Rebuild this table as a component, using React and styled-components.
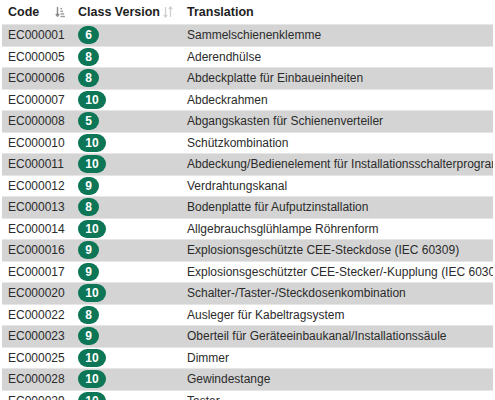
import React from 'react'
import styled, { createGlobalStyle } from 'styled-components'

const GlobalStyle = createGlobalStyle`
 html, body {
  margin: 0;
  padding: 0;
  background: #ffffff;
  font-family: "Liberation Sans", Arial, sans-serif;
 }
`

const Table = styled.div`
 width: 491px;
 margin-left: 2px;
 overflow: hidden;
 height: 400px;
 font-size: 12px;
`

const HeaderRow = styled.div`
 display: grid;
 grid-template-columns: 74px 109px 1fr;
 height: 24px;
 align-items: center;
 color: #1e1e1e;
 font-weight: bold;
 font-size: 12.5px;
`

const HeadCell = styled.div`
 display: flex;
 align-items: center;
 justify-content: space-between;
 padding-left: ${(p) => p.$pl || 0}px;
 padding-right: ${(p) => p.$pr || 0}px;
 white-space: nowrap;
`

const Row = styled.div`
 display: grid;
 grid-template-columns: 74px 109px 1fr;
 height: 21.5px;
 box-sizing: border-box;
 align-items: center;
 background: ${(p) => (p.$odd ? '#d4d4d4' : '#ffffff')};
 border-top: 1px solid #e6e6e6;
 color: #2b2b2b;
`

const CodeCell = styled.div`
 padding-left: 6px;
 white-space: nowrap;
`

const VersionCell = styled.div`
 padding-left: 2px;
`

const TextCell = styled.div`
 white-space: nowrap;
 overflow: hidden;
 padding-left: 2px;
`

const Badge = styled.span`
 display: inline-flex;
 align-items: center;
 justify-content: center;
 box-sizing: border-box;
 height: 18px;
 min-width: ${(p) => (p.$wide ? 28 : 21)}px;
 padding: 0 4px;
 border-radius: 10px;
 background: #0c7657;
 color: #ffffff;
 font-weight: bold;
 font-size: 12px;
`

const SortDown = () => (
 <svg width="10" height="12" viewBox="0 0 10 12">
  <path d="M2.5 1v9M0.8 8l1.7 2.2L4.2 8" stroke="#8a8a8a" strokeWidth="1.4" fill="none" />
  <rect x="5.5" y="2" width="1.6" height="1.4" fill="#9a9a9a" />
  <rect x="5.5" y="4.6" width="2.6" height="1.4" fill="#9a9a9a" />
  <rect x="5.5" y="7.2" width="3.6" height="1.4" fill="#9a9a9a" />
  <rect x="5.5" y="9.8" width="4.4" height="1.4" fill="#9a9a9a" />
 </svg>
)

const SortBoth = () => (
 <svg width="10" height="12" viewBox="0 0 10 12">
  <path d="M2.5 1v10M0.8 9l1.7 2L4.2 9" stroke="#cfcfcf" strokeWidth="1.3" fill="none" />
  <path d="M7.5 11V1M5.8 3l1.7-2 1.7 2" stroke="#cfcfcf" strokeWidth="1.3" fill="none" />
 </svg>
)

const rows = [
 ['EC000001', 6, 'Sammelschienenklemme'],
 ['EC000005', 8, 'Aderendhülse'],
 ['EC000006', 8, 'Abdeckplatte für Einbaueinheiten'],
 ['EC000007', 10, 'Abdeckrahmen'],
 ['EC000008', 5, 'Abgangskasten für Schienenverteiler'],
 ['EC000010', 10, 'Schützkombination'],
 ['EC000011', 10, 'Abdeckung/Bedienelement für Installationsschalterprogramm'],
 ['EC000012', 9, 'Verdrahtungskanal'],
 ['EC000013', 8, 'Bodenplatte für Aufputzinstallation'],
 ['EC000014', 10, 'Allgebrauchsglühlampe Röhrenform'],
 ['EC000016', 9, 'Explosionsgeschützte CEE-Steckdose (IEC 60309)'],
 ['EC000017', 9, 'Explosionsgeschützter CEE-Stecker/-Kupplung (IEC 60309)'],
 ['EC000020', 10, 'Schalter-/Taster-/Steckdosenkombination'],
 ['EC000022', 8, 'Ausleger für Kabeltragsystem'],
 ['EC000023', 9, 'Oberteil für Geräteeinbaukanal/Installationssäule'],
 ['EC000025', 10, 'Dimmer'],
 ['EC000028', 10, 'Gewindestange'],
 ['EC000029', 10, 'Taster'],
]

export default function App() {
 return (
  <>
   <GlobalStyle />
   <Table>
    <HeaderRow>
     <HeadCell $pl={6} $pr={11}>
      Code <SortDown />
     </HeadCell>
     <HeadCell $pl={2} $pr={12}>
      Class Version <SortBoth />
     </HeadCell>
     <HeadCell $pl={2}>Translation</HeadCell>
    </HeaderRow>
    {rows.map(([code, ver, text], i) => (
     <Row key={code} $odd={i % 2 === 0}>
      <CodeCell>{code}</CodeCell>
      <VersionCell>
       <Badge $wide={ver >= 10}>{ver}</Badge>
      </VersionCell>
      <TextCell>{text}</TextCell>
     </Row>
    ))}
   </Table>
  </>
 )
}
